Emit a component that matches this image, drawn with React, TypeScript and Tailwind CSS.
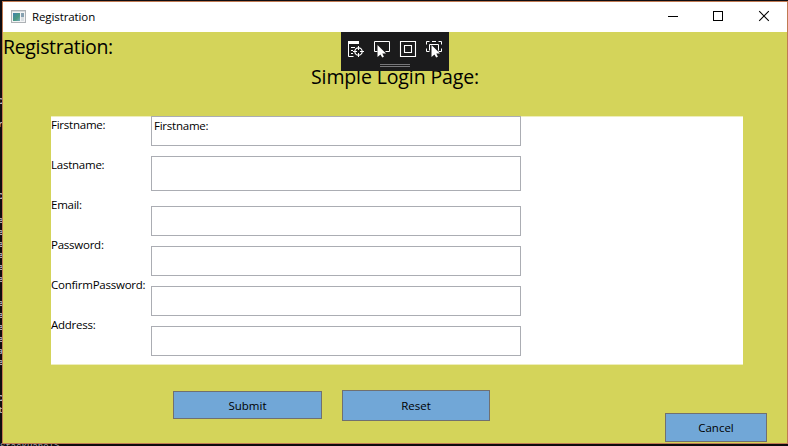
const LABELS = ["Firstname:", "Lastname:", "Email:", "Password:", "ConfirmPassword:", "Address:"];

const FIELDS = [
  { value: "Firstname:", size: "h-[30px]" },
  { value: "", size: "h-[35px] mt-[10px]" },
  { value: "", size: "h-[30px] mt-[15px]" },
  { value: "", size: "h-[30px] mt-[10px]" },
  { value: "", size: "h-[30px] mt-[10px]" },
  { value: "", size: "h-[30px] mt-[10px]" },
];

const EDITOR_GLYPHS = [
  { c: "C", top: 95 },
  { c: "r", top: 118 },
  { c: "C", top: 190 },
  { c: "e", top: 214 },
  { c: "e", top: 226 },
  { c: "e", top: 238 },
  { c: "e", top: 249 },
  { c: "e", top: 261 },
  { c: "e", top: 273 },
  { c: "e", top: 297 },
  { c: "e", top: 309 },
  { c: "e", top: 321 },
  { c: "e", top: 333 },
  { c: "a", top: 345 },
  { c: "e", top: 356 },
  { c: "C", top: 392 },
  { c: "t", top: 404 },
];

function AppIcon() {
  return (
    <svg width="15" height="13" viewBox="0 0 15 13" shapeRendering="crispEdges">
      <defs>
        <linearGradient id="pane" x1="0" y1="0" x2="1" y2="1">
          <stop offset="0" stopColor="#3f7fae" />
          <stop offset="0.6" stopColor="#4a9a80" />
          <stop offset="1" stopColor="#79a8c0" />
        </linearGradient>
      </defs>
      <rect x="0.5" y="0.5" width="14" height="12" fill="#f3f4f5" stroke="#aeb2b6" />
      <rect x="1" y="1" width="13" height="1" fill="#d5d9dc" />
      <rect x="2" y="3" width="7" height="8" fill="url(#pane)" />
      <rect x="10" y="3" width="3" height="4" fill="#86a0b0" />
      <rect x="10" y="7" width="3" height="4" fill="#d9dee2" />
    </svg>
  );
}

function WindowControls() {
  return (
    <svg width="138" height="30" viewBox="0 0 138 30" fill="none" stroke="#000">
      <path d="M19 14.500h10M64.500 9.500h9v9h-9z" shapeRendering="crispEdges" />
      <path d="M110.200 9.200l9.600 9.600M119.800 9.200l-9.600 9.600" strokeWidth="1.100" />
    </svg>
  );
}

function DebugToolbar() {
  return (
    <div className="absolute left-[338px] top-0 h-[39px] w-[108px] bg-[#1b1b1c]">
      <svg width="108" height="39" viewBox="0 0 108 39" fill="none" stroke="#fff">
        <rect x="7" y="9" width="11" height="3" fill="#fff" stroke="none" />
        <path d="M7.500 11v13.500h5M10 15.500h4M10 18.500h2M10 21.500h2" />
        <circle cx="17.500" cy="19.500" r="3.700" strokeWidth="1.200" />
        <path d="M17.500 14v4M17.500 21v4M12 19.500h4M19 19.500h4" />
        <path d="M36.500 19.500h-3v-10h15v10h-4" />
        <path d="M36.500 13v12l3-2.600 1.700 3.100 1.700-.8-1.600-3.200h3.700z" fill="#fff" stroke="none" />
        <path d="M59.500 9.500h15v15h-15zM63.500 13.500h7v7h-7z" strokeWidth="1.100" />
        <path d="M85.500 12.500v-3h3M97.500 9.500h3v3M85.500 16.500v3h3M97.500 19.500h3v-3M91 9.500h4" />
        <path d="M88.500 18.500v-6h9v6" />
        <path d="M90.500 13v12l3-2.600 1.700 3.100 1.700-.8-1.600-3.200h3.700z" fill="#fff" stroke="none" />
        <path d="M39 32.500h30M39 34.500h30" stroke="#77777a" shapeRendering="crispEdges" />
      </svg>
    </div>
  );
}

export default function App() {
  return (
    <div className="relative h-[446px] w-[788px] overflow-hidden bg-[#0e0c10] pl-[2px] pt-px font-['Open_Sans','Noto_Sans',sans-serif] text-[11.5px] leading-4 text-black">
      <div className="absolute left-0 top-0 h-full w-[2px] overflow-hidden font-['Liberation_Mono',monospace] text-[9px] font-bold leading-3 text-[#b9b9bd]">
        {EDITOR_GLYPHS.map((g) => (
          <span key={g.top} className="absolute left-[-2px]" style={{ top: g.top + 1 }}>
            {g.c}
          </span>
        ))}
      </div>
      <div className="absolute left-0 top-[441px] font-['Liberation_Mono',monospace] text-[9px] leading-3 text-[#a5a5a8]">
        StackPanel&gt;
      </div>

      <div className="relative flex h-[443px] w-[786px] flex-col border border-[#c07a52] bg-[#d4d45a]">
        <header className="flex h-[30px] shrink-0 items-center bg-white pl-[8px]">
          <div className="mb-px">
            <AppIcon />
          </div>
          <span className="ml-[6px] tracking-[-0.1px]">Registration</span>
          <div className="ml-auto">
            <WindowControls />
          </div>
        </header>

        <main className="relative flex h-[411px] flex-col">
          <h1 className="h-[30px] text-[19.5px] leading-[30px] tracking-[-0.34px]">Registration:</h1>
          <h2 className="h-[54px] pl-[308px] text-[19.5px] leading-[30px] tracking-[-0.12px]">Simple Login Page:</h2>

          <section className="ml-[48px] flex h-[249px] w-[692px] shrink-0 border-y border-[#eeeebb] bg-white">
            <div className="w-[100px]">
              {LABELS.map((label) => (
                <div key={label} className="h-[40px] whitespace-nowrap tracking-[-0.24px]">
                  {label}
                </div>
              ))}
            </div>
            <div className="-mt-px flex w-[370px] flex-col">
              {FIELDS.map((f, i) => (
                <div key={i} className={`shrink-0 border border-[#abadb3] bg-white pl-[2px] pt-[1px] tracking-[-0.24px] ${f.size}`}>
                  {f.value}
                </div>
              ))}
            </div>
          </section>

          <div className="ml-[170px] mt-[25px] flex items-start gap-[20px]">
            <button className="mt-px h-[28px] w-[149px] border border-[#707070] bg-[#71a7d7] pt-px">Submit</button>
            <button className="h-[31px] w-[148px] border border-[#707070] bg-[#71a7d7]">Reset</button>
          </div>
          <button className="ml-[662px] mt-[-8px] h-[29px] w-[102px] shrink-0 border border-[#707070] bg-[#71a7d7]">
            Cancel
          </button>

          <DebugToolbar />
        </main>
      </div>
    </div>
  );
}
